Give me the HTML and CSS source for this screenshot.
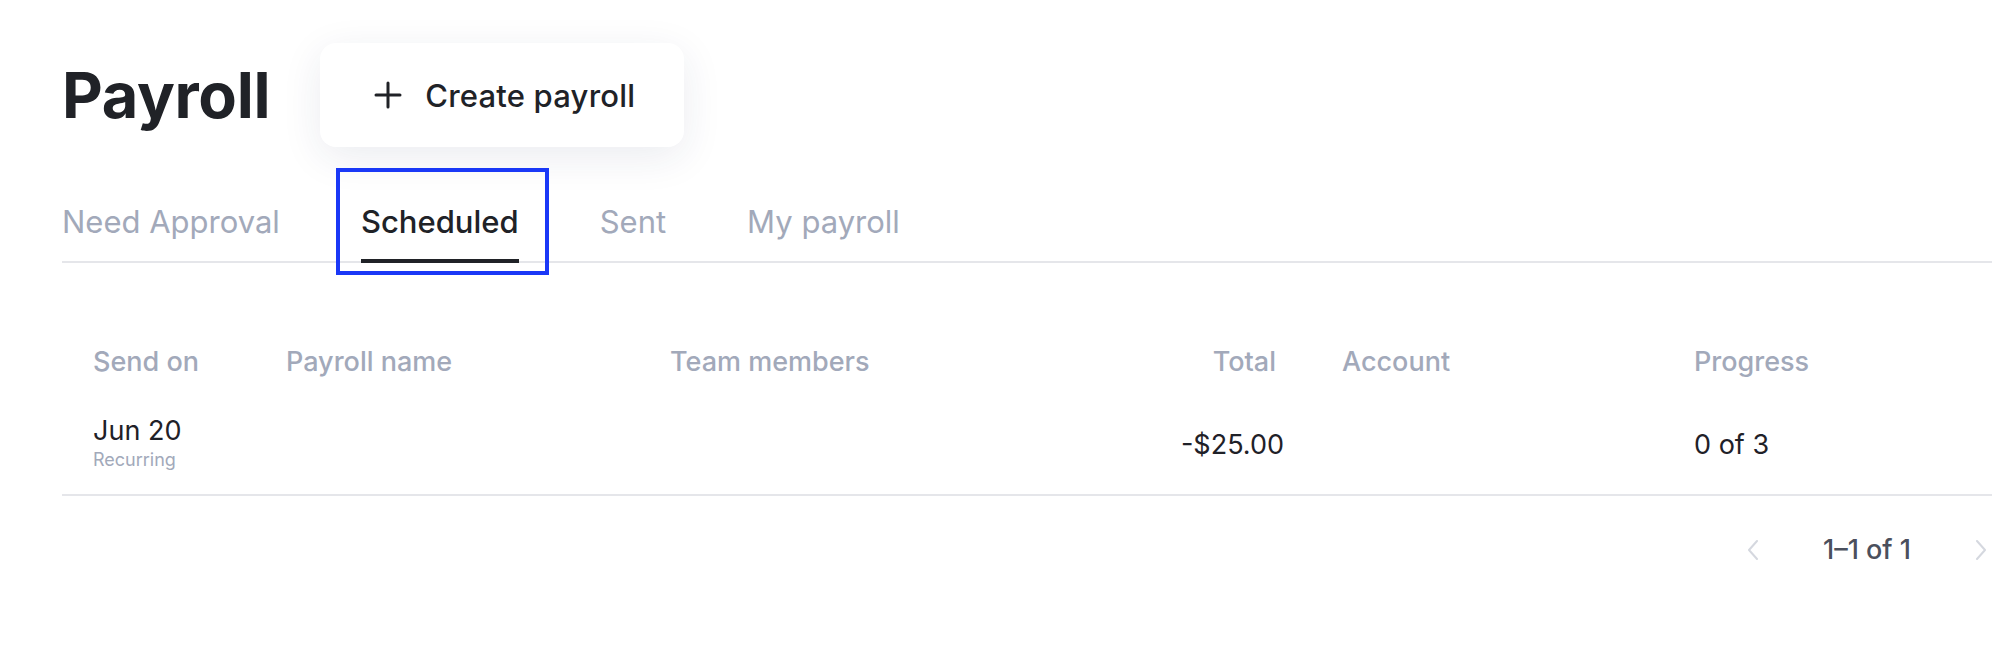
FILE: index.html
```html
<!DOCTYPE html>
<html lang="en">
	<head>
		<meta charset="UTF-8" />
		<meta name="viewport" content="width=device-width, initial-scale=1.0" />
		<title>Payroll</title>
		<link rel="stylesheet" href="styles.css">
	</head>
	<body>
		<div class="page">
			<div class="page-head">
				<h1 class="title">Payroll</h1>
				<button class="create-btn">
					<svg class="plus" width="28" height="28" viewBox="0 0 28 28">
						<path d="M14 2v24M2 14h24" />
					</svg>
					Create payroll
				</button>
			</div>

			<nav class="tabs">
				<button class="tab">Need Approval</button>
				<button class="tab active focused">Scheduled</button>
				<button class="tab">Sent</button>
				<button class="tab">My payroll</button>
			</nav>

			<div class="table">
				<div class="row head">
					<div class="cell">Send on</div>
					<div class="cell">Payroll name</div>
					<div class="cell">Team members</div>
					<div class="cell num">Total</div>
					<div class="cell">Account</div>
					<div class="cell">Progress</div>
				</div>
				<div class="row body">
					<div class="cell">
						<div class="date">Jun 20</div>
						<div class="sub">Recurring</div>
					</div>
					<div class="cell"></div>
					<div class="cell"></div>
					<div class="cell num value">-$25.00</div>
					<div class="cell"></div>
					<div class="cell value">0 of 3</div>
				</div>
			</div>

			<div class="pager">
				<svg class="chev" width="12" height="20" viewBox="0 0 12 20">
					<polyline points="10,1 2,10 10,19" />
				</svg>
				<span class="pager-count">1–1 of 1</span>
				<svg class="chev" width="12" height="20" viewBox="0 0 12 20">
					<polyline points="2,1 10,10 2,19" />
				</svg>
			</div>
		</div>
	</body>
</html>
```

FILE: styles.css
```css
body {
	margin: 0;
	background: #fff;
	color: #1f2128;
	font-family: "Inter", "Noto Sans", sans-serif;
	overflow: hidden;
}

button {
	font-family: inherit;
	border: none;
	background: none;
	padding: 0;
	cursor: pointer;
}

.page {
	padding: 43px 0 0 62px;
}

/* title + create button */
.page-head {
	display: flex;
	align-items: center;
	gap: 50px;
}

.title {
	margin: 0;
	font-size: 63px;
	font-weight: 700;
	line-height: 104px;
	letter-spacing: -0.3px;
	color: #202227;
}

.create-btn {
	display: flex;
	align-items: center;
	gap: 23px;
	height: 104px;
	padding: 0 49px 0 54px;
	background: #fff;
	border-radius: 16px;
	box-shadow: 0 10px 40px rgba(30, 40, 90, 0.09);
	font-size: 31px;
	font-weight: 500;
	letter-spacing: 0.2px;
	color: #202227;
}

.plus path {
	fill: none;
	stroke: #202227;
	stroke-width: 3;
	stroke-linecap: round;
}

/* tabs */
.tabs {
	display: flex;
	gap: 81px;
	margin-top: 55px;
	border-bottom: 2px solid #e5e6ea;
}

.tab {
	position: relative;
	font-size: 31px;
	line-height: 40px;
	color: #a2a9ba;
	padding-bottom: 17px;
	border-bottom: 4px solid transparent;
	margin-bottom: -2px;
}

.tab.active {
	color: #202227;
	font-weight: 500;
	border-bottom-color: #202227;
}

.tab.focused::after {
	content: "";
	position: absolute;
	left: -25px;
	right: -30px;
	top: -34px;
	bottom: -16px;
	border: 4px solid #1a38f7;
}

/* table */
.table {
	margin-top: 82px;
}

.row {
	display: grid;
	grid-template-columns: 193px 384px 384px 288px 352px 1fr;
	align-items: center;
}

.cell {
	padding-left: 31px;
}

.cell.num {
	text-align: right;
	padding-left: 0;
	padding-right: 27px;
}

.row.head {
	font-size: 27px;
	line-height: 34px;
	font-weight: 500;
	color: #a2a9ba;
	padding-bottom: 13px;
}

.row.head .num {
	padding-right: 35px;
}

.row.body {
	font-size: 27px;
	line-height: 34px;
	padding: 22px 0;
	border-bottom: 2px solid #e5e6ea;
}

.row.body .value {
	padding-top: 4px;
}

.sub {
	font-size: 18px;
	line-height: 24px;
	color: #a2a9ba;
}

/* pagination */
.pager {
	display: flex;
	justify-content: flex-end;
	align-items: center;
	gap: 64px;
	margin-top: 37px;
	padding-right: 5px;
}

.pager-count {
	font-size: 27px;
	line-height: 34px;
	font-weight: 500;
	color: #4b505d;
}

.chev polyline {
	fill: none;
	stroke: #d5d8df;
	stroke-width: 2;
	stroke-linecap: round;
	stroke-linejoin: round;
}
```
